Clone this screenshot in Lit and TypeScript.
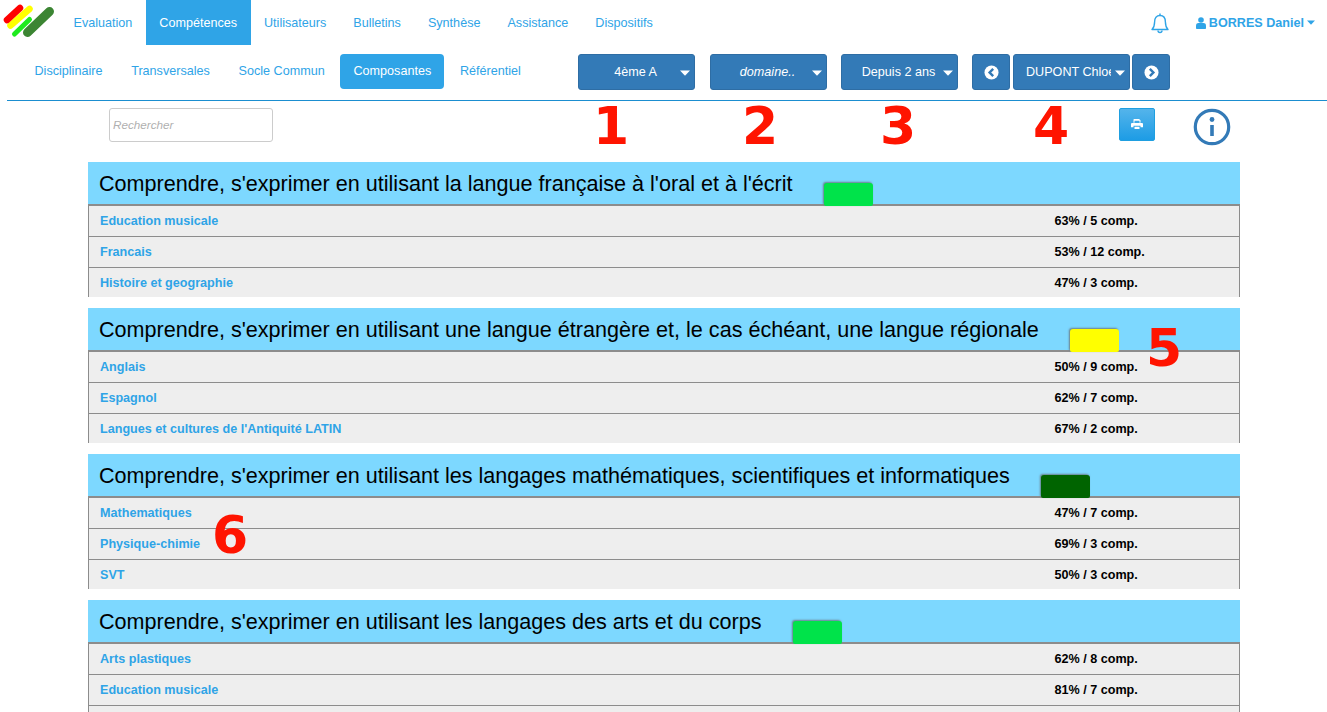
import { LitElement, html, css, svg } from "lit";
import { customElement } from "lit/decorators.js";

const caret = html`<svg class="caret" viewBox="0 0 10 6"><path d="M0 .5h10L5 5.8z" fill="currentColor"/></svg>`;

const circleChevron = (dir: "l" | "r") => html`<svg class="circ" viewBox="0 0 16 16">
  <circle cx="8" cy="8" r="7.5" fill="#fff"/>
  ${dir === "l"
    ? svg`<path d="M9.8 4.2 6 8l3.8 3.8" fill="none" stroke="#337ab7" stroke-width="2.6"/>`
    : svg`<path d="M6.2 4.2 10 8l-3.8 3.8" fill="none" stroke="#337ab7" stroke-width="2.6"/>`}
</svg>`;

interface Section { title: string; color: string; rows: [string, string][]; }

const sections: Section[] = [
  { title: "Comprendre, s'exprimer en utilisant la langue française à l'oral et à l'écrit", color: "#00e34a",
    rows: [["Education musicale", "63% / 5 comp."], ["Francais", "53% / 12 comp."], ["Histoire et geographie", "47% / 3 comp."]] },
  { title: "Comprendre, s'exprimer en utilisant une langue étrangère et, le cas échéant, une langue régionale", color: "#ffff00",
    rows: [["Anglais", "50% / 9 comp."], ["Espagnol", "62% / 7 comp."], ["Langues et cultures de l'Antiquité LATIN", "67% / 2 comp."]] },
  { title: "Comprendre, s'exprimer en utilisant les langages mathématiques, scientifiques et informatiques", color: "#006400",
    rows: [["Mathematiques", "47% / 7 comp."], ["Physique-chimie", "69% / 3 comp."], ["SVT", "50% / 3 comp."]] },
  { title: "Comprendre, s'exprimer en utilisant les langages des arts et du corps", color: "#00e34a",
    rows: [["Arts plastiques", "62% / 8 comp."], ["Education musicale", "81% / 7 comp."], ["", ""]] },
];

const marks: [string, number, number][] = [
  ["1", 593, 96], ["2", 742, 96], ["3", 880, 96], ["4", 1033, 96], ["5", 1146, 318], ["6", 212, 505],
];

@customElement("app-root")
export class AppRoot extends LitElement {
  static styles = css`
    :host { display: block; position: relative; height: 712px; overflow: hidden; background: #fff;
      font-family: "Liberation Sans", Arial, sans-serif; font-size: 12.6px; color: #2fa4e7; }
    .nav { display: flex; height: 45px; align-items: stretch; }
    .logo { width: 60px; height: 45px; flex: none; }
    .nav a { display: flex; align-items: center; padding: 0 13.5px; color: #2fa4e7; }
    .nav a.on { background: #2fa4e7; color: #fff; }
    .right { margin-left: auto; display: flex; align-items: center; padding-right: 12px; }
    .bell { width: 20px; height: 22px; margin-right: 26px; }
    .user { display: flex; align-items: center; font-weight: bold; gap: 3px; }
    .user svg.u { width: 10px; height: 12px; }
    .user .caret { width: 8px; height: 5px; }
    .sub { display: flex; align-items: flex-start; margin-left: 7px; border-bottom: 1px solid #1b8ed0; box-sizing: border-box; height: 56px; padding-top: 9px; }
    .tabs { display: flex; gap: 1.8px; width: 571px; flex: none; padding-left: 14px; box-sizing: border-box; }
    .tabs a { height: 35px; line-height: 35px; padding: 0 13.5px; color: #2fa4e7; border-radius: 4px; }
    .tabs a.on { background: #2fa4e7; color: #fff; padding-right: 13px; margin-right: .5px; }
    .btn { height: 36px; background: #337ab7; border: 1px solid #2e6da4; border-radius: 3px; box-sizing: border-box;
      color: #fff; display: flex; align-items: center; position: relative; flex: none; }
    .sel { width: 117px; justify-content: center; white-space: nowrap; padding-right: 2px; }
    .sel .caret, .student .caret { position: absolute; right: 4px; top: 15px; }
    .caret { width: 10px; height: 6px; }
    .mr15 { margin-right: 15px; }
    .mr14 { margin-right: 14px; }
    .mr3 { margin-right: 3px; }
    .mr2 { margin-right: 2px; }
    .it { font-style: italic; }
    .arrow { width: 38px; justify-content: center; }
    .circ { width: 15px; height: 15px; }
    .student { width: 117px; padding-left: 12px; }
    .student .clip { width: 85px; overflow: hidden; white-space: nowrap; }
    .tools { display: flex; height: 61px; align-items: flex-start; padding-top: 7px; box-sizing: border-box; padding-left: 109px; }
    .search { width: 164px; height: 34px; box-sizing: border-box; border: 1px solid #ccc; border-radius: 3px;
      font: italic 11.700px "Liberation Sans", Arial, sans-serif; padding: 0 3px 2px; color: #555; margin-right: 846px; flex: none; }
    .search::placeholder { color: #b0b0b0; opacity: 1; }
    .print { width: 36px; height: 33px; flex: none; border-radius: 2px; background: linear-gradient(#54b4eb, #1d9ce5); border: 1px solid #1f9fe0;
      box-sizing: border-box; display: flex; align-items: center; justify-content: center; margin-right: 38px; }
    .print svg { width: 12px; height: 10px; margin-top: -2px; }
    .info { width: 38px; height: 38px; flex: none; }
    .sec { margin: 0 87px 11px 88px; }
    .head { height: 42px; background: #7dd8ff; display: flex; padding-left: 11px; color: #000; font-size: 21.580px; line-height: 43px; white-space: nowrap; }
    .badge { width: 49px; height: 23px; margin-left: 31.500px; margin-top: auto; position: relative; top: 2px; z-index: 1;
      border-radius: 3px 3px 2px 2px; box-shadow: -1px -1px 2px #6a7f8a; }
    .row { display: flex; height: 30.500px; align-items: center; background: #eee; border-top: 1px solid #8c8c8c;
      border-left: 1px solid #8c8c8c; border-right: 1px solid #8c8c8c; box-sizing: border-box;
      font-weight: bold; padding-left: 11px; padding-top: 1px; }
    .row.first { border-top-width: 2px; height: 32px; padding-top: 0; }
    .row .n { width: 954.500px; flex: none; }
    .row .v { color: #000; }
    .mark { position: absolute; color: #ff1400; font: bold 52px/60px "DejaVu Sans", sans-serif; }
  `;

  render() {
    return html`
      <div class="nav">
        <svg class="logo" viewBox="0 0 60 45">
          <g stroke-linecap="round" fill="none">
            <path d="M10.500 25.500 29.500 9" stroke="#ff0" stroke-width="6.500"/>
            <path d="M7 20 20 8" stroke="#f00" stroke-width="6.500"/>
            <path d="M14.500 34 29.500 19.500" stroke="#1eea1e" stroke-width="5"/>
            <path d="M27.500 32.500 49.500 11.500" stroke="#3c8533" stroke-width="9"/>
          </g>
        </svg>
        <a>Evaluation</a><a class="on">Compétences</a><a>Utilisateurs</a><a>Bulletins</a><a>Synthèse</a><a>Assistance</a><a>Dispositifs</a>
        <div class="right">
          <svg class="bell" viewBox="0 0 20 22" fill="none" stroke="#2fa4e7" stroke-width="1.4">
            <path d="M2 17.500c2-2 2.600-4 2.600-7.500C4.600 6 6.500 3.500 10 3.500s5.400 2.500 5.400 6.500c0 3.500.6 5.500 2.600 7.500z" stroke-linejoin="round"/>
            <path d="M10 3.500V1.500M8 18.500a2 2 0 0 0 4 0"/>
          </svg>
          <div class="user">
            <svg class="u" viewBox="0 0 10 12"><circle cx="5" cy="3" r="2.800" fill="#2fa4e7"/><path d="M0 11V8.500C0 6.800 1.200 6 2.500 6h5C8.800 6 10 6.800 10 8.500V11c0 .6-.5 1-1 1H1c-.5 0-1-.4-1-1z" fill="#2fa4e7"/></svg>
            <span>BORRES Daniel</span>${caret}
          </div>
        </div>
      </div>
      <div class="sub">
        <div class="tabs"><a>Disciplinaire</a><a>Transversales</a><a>Socle Commun</a><a class="on">Composantes</a><a>Référentiel</a></div>
        <div class="btn sel mr15">4ème A${caret}</div>
        <div class="btn sel mr14"><span class="it">domaine..</span>${caret}</div>
        <div class="btn sel mr14">Depuis 2 ans${caret}</div>
        <div class="btn arrow mr3">${circleChevron("l")}</div>
        <div class="btn student mr2"><span class="clip">DUPONT Chloe</span>${caret}</div>
        <div class="btn arrow">${circleChevron("r")}</div>
      </div>
      <div class="tools">
        <input class="search" placeholder="Rechercher" />
        <div class="print"><svg viewBox="0 0 12 11" preserveAspectRatio="none"><path fill="#fff" d="M3 0h5l1.500 1.500V4H8.500V2H3.500V4H2.500V.5zM1 4.500h10a1 1 0 0 1 1 1V9H9.500V7.500h-7V9H0V5.500a1 1 0 0 1 1-1zM3.500 8.500h5V11h-5z"/></svg></div>
        <svg class="info" viewBox="0 0 38 38">
          <circle cx="19" cy="19" r="16.700" fill="none" stroke="#337ab7" stroke-width="3.200"/>
          <circle cx="19" cy="11.500" r="2.400" fill="#337ab7"/>
          <path d="M17.200 17h3.600v11h-3.600z" fill="#337ab7"/>
        </svg>
      </div>
      ${sections.map((s) => html`
        <div class="sec">
          <div class="head"><span>${s.title}</span><span class="badge" style="background:${s.color}"></span></div>
          ${s.rows.map((r, i) => html`<div class="row ${i === 0 ? "first" : ""}"><span class="n">${r[0]}</span><span class="v">${r[1]}</span></div>`)}
        </div>`)}
      ${marks.map((m) => html`<div class="mark" style="left:${m[1]}px;top:${m[2]}px">${m[0]}</div>`)}
    `;
  }
}
